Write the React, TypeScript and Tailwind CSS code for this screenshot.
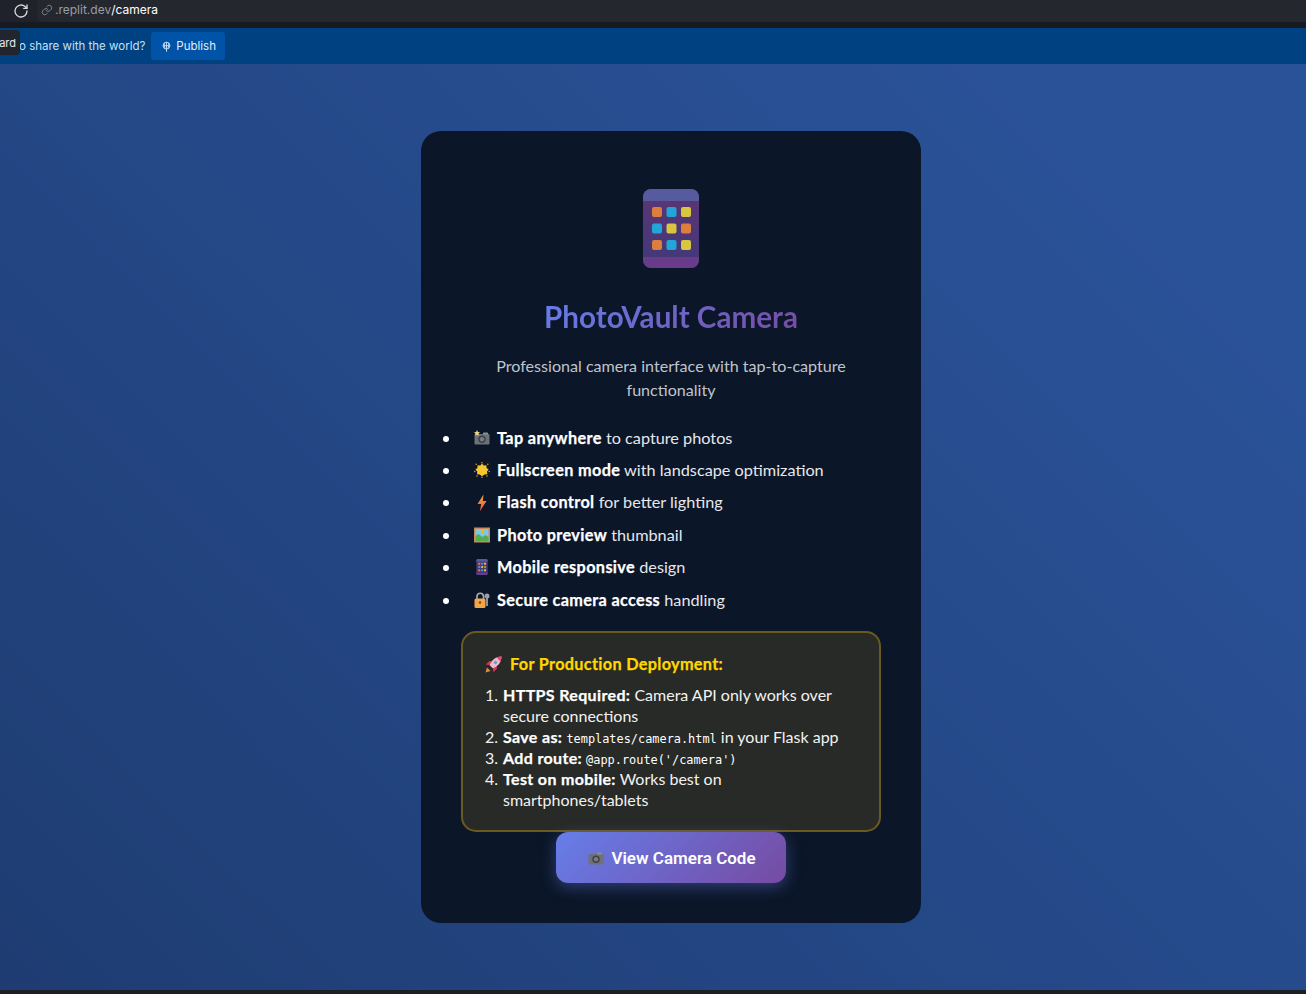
import type { ReactNode } from "react";

const sans = "font-['Lato','Noto_Sans',sans-serif]";
const heavy = "font-bold tracking-[0.35px] text-white [-webkit-text-stroke:0.25px_currentColor]";

function PhoneGlyph({ className }: { className: string }) {
  const rows = [
    ["#dc7f3e", "#22a5d8", "#d8c640"],
    ["#22a5d8", "#d8c640", "#dc7f3e"],
    ["#dc7f3e", "#22a5d8", "#d8c640"],
  ];
  return (
    <svg viewBox="0 0 56 79" className={className}>
      <defs>
        <linearGradient id="phone-body" x1="0" y1="0" x2="0" y2="1">
          <stop offset="0" stopColor="#5d3572" />
          <stop offset="1" stopColor="#40397a" />
        </linearGradient>
      </defs>
      <rect width="56" height="79" rx="8" fill="url(#phone-body)" />
      <path d="M0 12V8a8 8 0 0 1 8-8h40a8 8 0 0 1 8 8v4z" fill="#565a9f" />
      <path d="M0 68v3a8 8 0 0 0 8 8h40a8 8 0 0 0 8-8v-3z" fill="#683b8b" />
      {rows.map((row, y) =>
        row.map((fill, x) => <rect key={`${x}-${y}`} x={9 + x * 14.5} y={18 + y * 16.5} width="10" height="10" rx="2" fill={fill} />),
      )}
    </svg>
  );
}

function CameraGlyph({ flash = true }: { flash?: boolean }) {
  return (
    <svg viewBox="0 0 16 16" className="h-4 w-4">
      <rect x="0.500" y="4" width="15" height="10.500" rx="1" fill="#6e7178" />
      <rect x="9" y="2.500" width="5" height="2" rx="0.500" fill="#8a8d93" />
      <circle cx="8" cy="9.200" r="3.700" fill="#3f4148" />
      <circle cx="8" cy="9.200" r="2.200" fill="#787c83" />
      {flash ? <path d="M3 0l.9 1.900 2.100.4-1.500 1.400.3 2L3 4.800 1.200 5.700l.3-2L0 2.300l2.100-.4z" fill="#f3d58a" /> : null}
    </svg>
  );
}

function SunGlyph() {
  return (
    <svg viewBox="0 0 16 16" className="h-4 w-4">
      <path d="M8 1.500l1.700 2 2.700-.3.200 2.700 2 1.600-1.600 2.100.3 2.600-2.700.3L8 14.300l-2.300-1.800-2.700-.3.300-2.600L1.400 7.500l2-1.600.2-2.700 2.700.3z" fill="#f7c52e" />
      <circle cx="8" cy="0.800" r="0.800" fill="#d99a1f" />
      <circle cx="8" cy="15.200" r="0.800" fill="#d99a1f" />
      <circle cx="0.800" cy="9.500" r="0.800" fill="#d99a1f" />
      <circle cx="15.200" cy="9.500" r="0.800" fill="#d99a1f" />
      <circle cx="2.200" cy="2.200" r="0.800" fill="#d99a1f" />
      <circle cx="13.800" cy="2.200" r="0.800" fill="#d99a1f" />
      <circle cx="3" cy="14" r="0.800" fill="#d99a1f" />
      <circle cx="13" cy="14" r="0.800" fill="#d99a1f" />
    </svg>
  );
}

function BoltGlyph() {
  return (
    <svg viewBox="0 0 16 18" className="h-[18px] w-4">
      <defs>
        <linearGradient id="bolt-fill" x1="0" y1="0" x2="0" y2="1">
          <stop offset="0" stopColor="#f9a83d" />
          <stop offset="1" stopColor="#e8503a" />
        </linearGradient>
      </defs>
      <path d="M9.500 0.500 3.500 10h3.700L5.800 17.500 12.500 7H8.800z" fill="url(#bolt-fill)" />
    </svg>
  );
}

function PictureGlyph() {
  return (
    <svg viewBox="0 0 16 16" className="h-4 w-4">
      <rect y="0.500" width="16" height="15" fill="#c98a5a" />
      <rect x="1.500" y="2" width="13" height="12" fill="#7cc8e8" />
      <circle cx="8.500" cy="4.500" r="2" fill="#f0b23c" />
      <path d="M1.500 14V9l3-2 4 3 3-2 3 2v4z" fill="#55ad4f" />
    </svg>
  );
}

function LockGlyph() {
  return (
    <svg viewBox="0 0 16 16" className="h-4 w-4">
      <path d="M3 7V4a3.300 3.300 0 0 1 6.500 0v3" fill="none" stroke="#a9adb3" strokeWidth="1.600" />
      <rect x="0.500" y="6.500" width="11" height="9.500" rx="1.500" fill="#f5a64a" />
      <circle cx="6" cy="10.500" r="1.300" fill="#7a4a1c" />
      <circle cx="13" cy="4" r="2.500" fill="#9aa0a8" />
      <rect x="12.100" y="5" width="1.800" height="9" fill="#9aa0a8" />
    </svg>
  );
}

function RocketGlyph() {
  return (
    <svg viewBox="0 0 17 17" className="h-[17px] w-[17px]">
      <path d="M0.500 16.500l1.500-5 3.500 3.500z" fill="#e88a3c" />
      <path d="M4 9 0.800 8.500 4.500 5H7zM8 13l.5 3.200 3.500-3.700V10z" fill="#d9365e" />
      <path d="M16.500 0.500c-5.500.2-9.500 3-12 8.500l3.500 3.500c5.500-2.500 8.300-6.500 8.500-12z" fill="#f5b8c8" />
      <path d="M16.500 0.500c-1.800.1-3.400.4-4.900 1l3.900 3.900c.6-1.500.9-3.100 1-4.900z" fill="#e8467a" />
      <circle cx="10.500" cy="6.500" r="1.700" fill="#5aa6dc" />
    </svg>
  );
}

function Feature({ icon, title, rest }: { icon: ReactNode; title: string; rest: string }) {
  return (
    <li className="relative flex h-[32.400px] items-center pl-[13px] text-[16.250px] whitespace-nowrap text-[#e6e8ec]">
      <span className="absolute -left-[18px] top-[14px] h-[6px] w-[6px] rounded-full bg-white" />
      <span className="mr-[7px] flex w-4 shrink-0 justify-center">{icon}</span>
      <span>
        <strong className={heavy}>{title}</strong> {rest}
      </span>
    </li>
  );
}

function Code({ children }: { children: string }) {
  return <code className="font-['DejaVu_Sans_Mono','Liberation_Mono',monospace] text-[11.900px] leading-none text-white">{children}</code>;
}

function Step({ n, children }: { n: number; children: ReactNode }) {
  return (
    <li className="relative pl-[18px]">
      <span className="absolute left-0 top-0">{n}.</span>
      {children}
    </li>
  );
}

export default function App() {
  return (
    <div className={`flex h-[994px] flex-col overflow-hidden bg-[#1f2937] ${sans}`}>
      <header className="flex h-[22px] shrink-0 items-center bg-[#1f222a] pl-[13px]">
        <svg viewBox="0 0 24 24" className="h-4 w-4" fill="none" stroke="#d8dade" strokeWidth="2" strokeLinecap="round" strokeLinejoin="round">
          <path d="M21 12a9 9 0 1 1-3-6.700L21 8" />
          <path d="M21 3v5h-5" />
        </svg>
        <div className="ml-[8px] flex h-[22px] flex-1 items-center rounded-bl-md bg-[#25272f] pb-[2px] pl-[4px] font-['Inter',sans-serif] text-[12px]">
          <svg viewBox="0 0 24 24" className="mr-[2px] h-[12px] w-[12px]" fill="none" stroke="#80848c" strokeWidth="2" strokeLinecap="round">
            <path d="M10 13a5 5 0 0 0 7.500.5l3-3a5 5 0 0 0-7-7l-1.700 1.700" />
            <path d="M14 11a5 5 0 0 0-7.500-.5l-3 3a5 5 0 0 0 7 7l1.700-1.700" />
          </svg>
          <span className="text-[#9a9da5]">.replit.dev</span>
          <span className="text-white">/camera</span>
        </div>
      </header>
      <div className="h-[6px] shrink-0 bg-[#171a21]" />
      <div className="relative flex h-[36px] shrink-0 items-center bg-[#004182] pb-px pl-[19px] font-['Inter',sans-serif] text-[11.500px] text-[#c5e0fa]">
        <span className="mt-[2px]">o share with the world?</span>
        <button className="ml-[6px] mt-px flex h-[28px] w-[74px] items-center gap-[4px] rounded-[3px] bg-[#0053a6] pl-[10px] pt-px text-[#e2f0fd]">
          <svg viewBox="0 0 24 24" className="h-[12px] w-[11px]" fill="none" stroke="#c5e0fa" strokeWidth="2">
            <circle cx="12" cy="9" r="7.500" />
            <path d="M4.500 9h15M12 1.500v21M8 3c-1 4-1 8 1 12M16 3c1 4 1 8-1 12" />
          </svg>
          Publish
        </button>
        <div className="absolute left-0 top-[2px] flex h-[25px] w-[20px] items-center justify-end rounded-r-[4px] bg-[#22252e] pr-[4px] pt-px text-[11px] text-[#e6e8ec]">
          ard
        </div>
      </div>
      <main className="flex flex-1 items-start justify-center bg-[linear-gradient(225deg,#2a5298_15%,#1e3c72_100%)] pl-[36px] pt-[67px]">
        <section className="flex h-[792px] w-[500px] flex-col items-center rounded-[20px] bg-[#0b1628] px-10 pt-[58px]">
          <PhoneGlyph className="h-[79px] w-[56px]" />
          <h1 className="mt-[30px] bg-[linear-gradient(135deg,#667eea,#764ba2)] bg-clip-text text-[29.600px] leading-[38px] font-bold text-transparent">PhotoVault Camera</h1>
          <p className="mt-[18px] w-[380px] text-center text-[16.100px] leading-[24px] text-[#c0c4cc]">Professional camera interface with tap-to-capture functionality</p>
          <ul className="mt-[19.600px] w-full">
            <Feature icon={<CameraGlyph />} title="Tap anywhere" rest="to capture photos" />
            <Feature icon={<SunGlyph />} title="Fullscreen mode" rest="with landscape optimization" />
            <Feature icon={<BoltGlyph />} title="Flash control" rest="for better lighting" />
            <Feature icon={<PictureGlyph />} title="Photo preview" rest="thumbnail" />
            <Feature icon={<PhoneGlyph className="h-4 w-3" />} title="Mobile responsive" rest="design" />
            <Feature icon={<LockGlyph />} title="Secure camera access" rest="handling" />
          </ul>
          <div className="mt-[15.400px] h-[201px] w-[420px] rounded-[15px] border-2 border-[#6b5a20] bg-[#282a27] px-[22px] pt-[19px]">
            <h3 className="flex items-center text-[16.250px] leading-[24px] font-bold tracking-[0.32px] text-[#ffd700] [-webkit-text-stroke:0.25px_currentColor]">
              <RocketGlyph />
              <span className="ml-2">For Production Deployment:</span>
            </h3>
            <ol className="mt-[8px] text-[16px] leading-[21px] text-[#f2f2f2]">
              <Step n={1}>
                <strong className={heavy}>HTTPS Required:</strong> Camera API only works over secure connections
              </Step>
              <Step n={2}>
                <strong className={heavy}>Save as:</strong> <Code>templates/camera.html</Code> in your Flask app
              </Step>
              <Step n={3}>
                <strong className={heavy}>Add route:</strong> <Code>@app.route('/camera')</Code>
              </Step>
              <Step n={4}>
                <strong className={heavy}>Test on mobile:</strong> Works best on smartphones/tablets
              </Step>
            </ol>
          </div>
          <button className="flex h-[51px] w-[230px] items-center justify-center gap-[7px] rounded-[12px] bg-[linear-gradient(135deg,#667eea,#764ba2)] pl-[2px] pt-px font-['Roboto',sans-serif] text-[17px] font-semibold text-white shadow-[0_4px_15px_rgba(102,126,234,0.4)]">
            <CameraGlyph flash={false} />
            View Camera Code
          </button>
        </section>
      </main>
      <div className="h-1 shrink-0 bg-[#1c1f26]" />
    </div>
  );
}
